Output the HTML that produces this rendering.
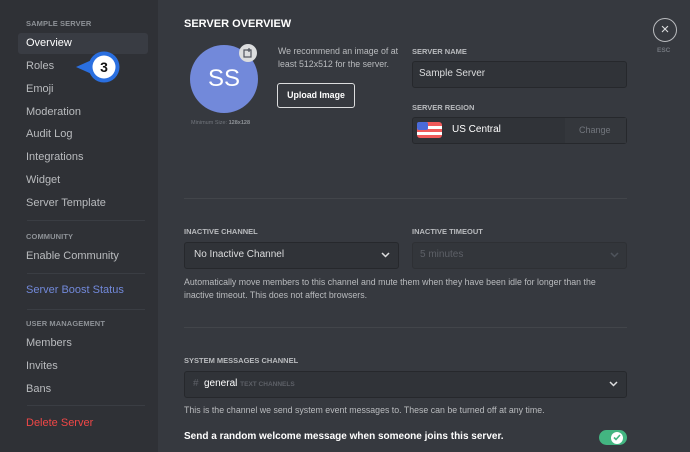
<!DOCTYPE html>
<html><head><style>
*{margin:0;padding:0;box-sizing:border-box}
body{width:690px;height:452px;overflow:hidden;background:#36393f;font-family:"Liberation Sans",sans-serif;position:relative}
.a{position:absolute;white-space:nowrap}
#side{position:absolute;left:0;top:0;width:158px;height:452px;background:#2f3136}
.it{position:absolute;left:26px;font-size:11px;color:#b9bbbe}
.hd{position:absolute;left:26px;font-size:7.5px;font-weight:bold;color:#8e9297;letter-spacing:.1px}
.sep{position:absolute;left:27px;width:118px;height:1px;background:#3a3d43}
.lbl{position:absolute;font-size:7.5px;font-weight:bold;color:#b9bbbe}
.box{position:absolute;background:#303338;border:1px solid #26282c;border-radius:3px}
.help{position:absolute;font-size:8.8px;color:#b9bbbe;white-space:nowrap}
.hr{position:absolute;left:184px;width:443px;height:1px;background:#42454a}
</style></head><body>
<div id="side">
<div class="hd" style="top:19px">SAMPLE SERVER</div>
<div style="position:absolute;left:18px;top:33px;width:130px;height:21px;background:#393c43;border-radius:3px"></div>
<div class="it" style="top:37px;color:#fff">Overview</div>
<div class="it" style="top:60px">Roles</div>
<div class="it" style="top:83px">Emoji</div>
<div class="it" style="top:106px">Moderation</div>
<div class="it" style="top:128px">Audit Log</div>
<div class="it" style="top:151px">Integrations</div>
<div class="it" style="top:174px">Widget</div>
<div class="it" style="top:197px">Server Template</div>
<div class="sep" style="top:220px"></div>
<div class="hd" style="top:232px">COMMUNITY</div>
<div class="it" style="top:250px">Enable Community</div>
<div class="sep" style="top:273px"></div>
<div class="it" style="top:284px;color:#7289da">Server Boost Status</div>
<div class="sep" style="top:309px"></div>
<div class="hd" style="top:319px">USER MANAGEMENT</div>
<div class="it" style="top:337px">Members</div>
<div class="it" style="top:360px">Invites</div>
<div class="it" style="top:383px">Bans</div>
<div class="sep" style="top:405px"></div>
<div class="it" style="top:417px;color:#f04747">Delete Server</div>
</div>
<svg class="a" style="left:74px;top:50px" width="48" height="34"><path d="M2 17 L20 9 L20 25 Z" fill="#2a6fe0"/><circle cx="30" cy="17" r="15.5" fill="#2a6fe0"/><circle cx="30" cy="17" r="11.5" fill="#fff"/><text x="30" y="22" text-anchor="middle" font-size="14" font-weight="bold" font-family="Liberation Sans" fill="#111">3</text></svg>

<div class="a" style="left:184px;top:18px;font-size:11px;font-weight:bold;color:#fff">SERVER OVERVIEW</div>
<div class="a" style="left:190px;top:45px;width:68px;height:68px;border-radius:50%;background:#7289da;color:#fff;font-size:24px;text-align:center;line-height:68px">SS</div>
<div class="a" style="left:239px;top:44px;width:18px;height:18px;border-radius:50%;background:#dcddde"></div>
<svg class="a" style="left:243px;top:48px" width="10" height="10"><rect x="1" y="2" width="7" height="7" fill="none" stroke="#4f545c" stroke-width="1.2"/><path d="M6 0v4M4 2h4" stroke="#4f545c" stroke-width="1.2"/></svg>
<div class="a" style="left:191px;top:120px;font-size:5.5px;color:#72767d">Minimum Size: <b style="color:#8e9297">128x128</b></div>
<div class="a" style="left:278px;top:45px;font-size:8.8px;color:#b9bbbe;line-height:13px">We recommend an image of at<br>least 512x512 for the server.</div>
<div class="a" style="left:277px;top:83px;width:78px;height:25px;border:1px solid #dcddde;border-radius:3px;color:#fff;font-size:8.8px;font-weight:bold;text-align:center;line-height:23px">Upload Image</div>

<div class="lbl" style="left:412px;top:47px">SERVER NAME</div>
<div class="box" style="left:412px;top:61px;width:215px;height:27px"></div>
<div class="a" style="left:419px;top:68px;font-size:10px;color:#dcddde">Sample Server</div>
<div class="lbl" style="left:412px;top:103px">SERVER REGION</div>
<div class="box" style="left:412px;top:117px;width:215px;height:27px"></div>
<div class="a" style="left:565px;top:118px;width:61px;height:25px;background:#34373c"></div>
<div class="a" style="left:579px;top:125px;font-size:9px;color:#72767d">Change</div>
<svg class="a" style="left:417px;top:122px" width="26" height="17"><rect width="25" height="16" rx="3" fill="#f05a5a"/><rect y="4" width="25" height="3" fill="#fff"/><rect y="10" width="25" height="3" fill="#fff"/><rect width="11" height="8" rx="2" fill="#4a6ad8"/></svg>
<div class="a" style="left:452px;top:124px;font-size:10px;color:#fff">US Central</div>
<div class="a" style="left:653px;top:18px;width:24px;height:24px;border:1px solid #b9bbbe;border-radius:50%;color:#dcddde;font-size:15px;text-align:center;line-height:21px">×</div>
<div class="a" style="left:657px;top:47px;font-size:6.5px;font-weight:bold;color:#72767d">ESC</div>

<div class="hr" style="top:198px"></div>
<div class="lbl" style="left:184px;top:227px">INACTIVE CHANNEL</div>
<div class="lbl" style="left:412px;top:227px">INACTIVE TIMEOUT</div>
<div class="box" style="left:184px;top:242px;width:215px;height:27px"></div>
<div class="a" style="left:194px;top:249px;font-size:10px;color:#dcddde">No Inactive Channel</div>
<svg class="a" style="left:381px;top:252px" width="9" height="6"><path d="M1 1l3.5 3.5L8 1" stroke="#dcddde" stroke-width="1.5" fill="none"/></svg>
<div class="box" style="left:412px;top:242px;width:215px;height:27px;background:#33363b;border-color:#2e3034"></div>
<div class="a" style="left:420px;top:249px;font-size:10px;color:#5d6067">5 minutes</div>
<svg class="a" style="left:610px;top:252px" width="9" height="6"><path d="M1 1l3.5 3.5L8 1" stroke="#4f545c" stroke-width="1.5" fill="none"/></svg>
<div class="help" style="left:184px;top:276px;line-height:13px">Automatically move members to this channel and mute them when they have been idle for longer than the<br>inactive timeout. This does not affect browsers.</div>
<div class="hr" style="top:327px"></div>
<div class="lbl" style="left:184px;top:356px">SYSTEM MESSAGES CHANNEL</div>
<div class="box" style="left:184px;top:371px;width:443px;height:27px"></div>
<div class="a" style="left:193px;top:378px;font-size:10px;color:#5d6067">#</div>
<div class="a" style="left:204px;top:378px;font-size:10px;color:#fff">general <span style="font-size:6.5px;font-weight:bold;color:#5d6067">TEXT CHANNELS</span></div>
<svg class="a" style="left:609px;top:381px" width="9" height="6"><path d="M1 1l3.5 3.5L8 1" stroke="#dcddde" stroke-width="1.5" fill="none"/></svg>
<div class="help" style="left:184px;top:405px">This is the channel we send system event messages to. These can be turned off at any time.</div>
<div class="a" style="left:184px;top:431px;font-size:10px;font-weight:bold;color:#fff">Send a random welcome message when someone joins this server.</div>
<div class="a" style="left:599px;top:430px;width:28px;height:15px;border-radius:8px;background:#43b581"></div>
<div class="a" style="left:611px;top:431.5px;width:12px;height:12px;border-radius:50%;background:#fff"></div>
<svg class="a" style="left:613px;top:434px" width="8" height="7"><path d="M1 3.5l2 2L7 1" stroke="#43b581" stroke-width="1.6" fill="none"/></svg>
</body></html>
